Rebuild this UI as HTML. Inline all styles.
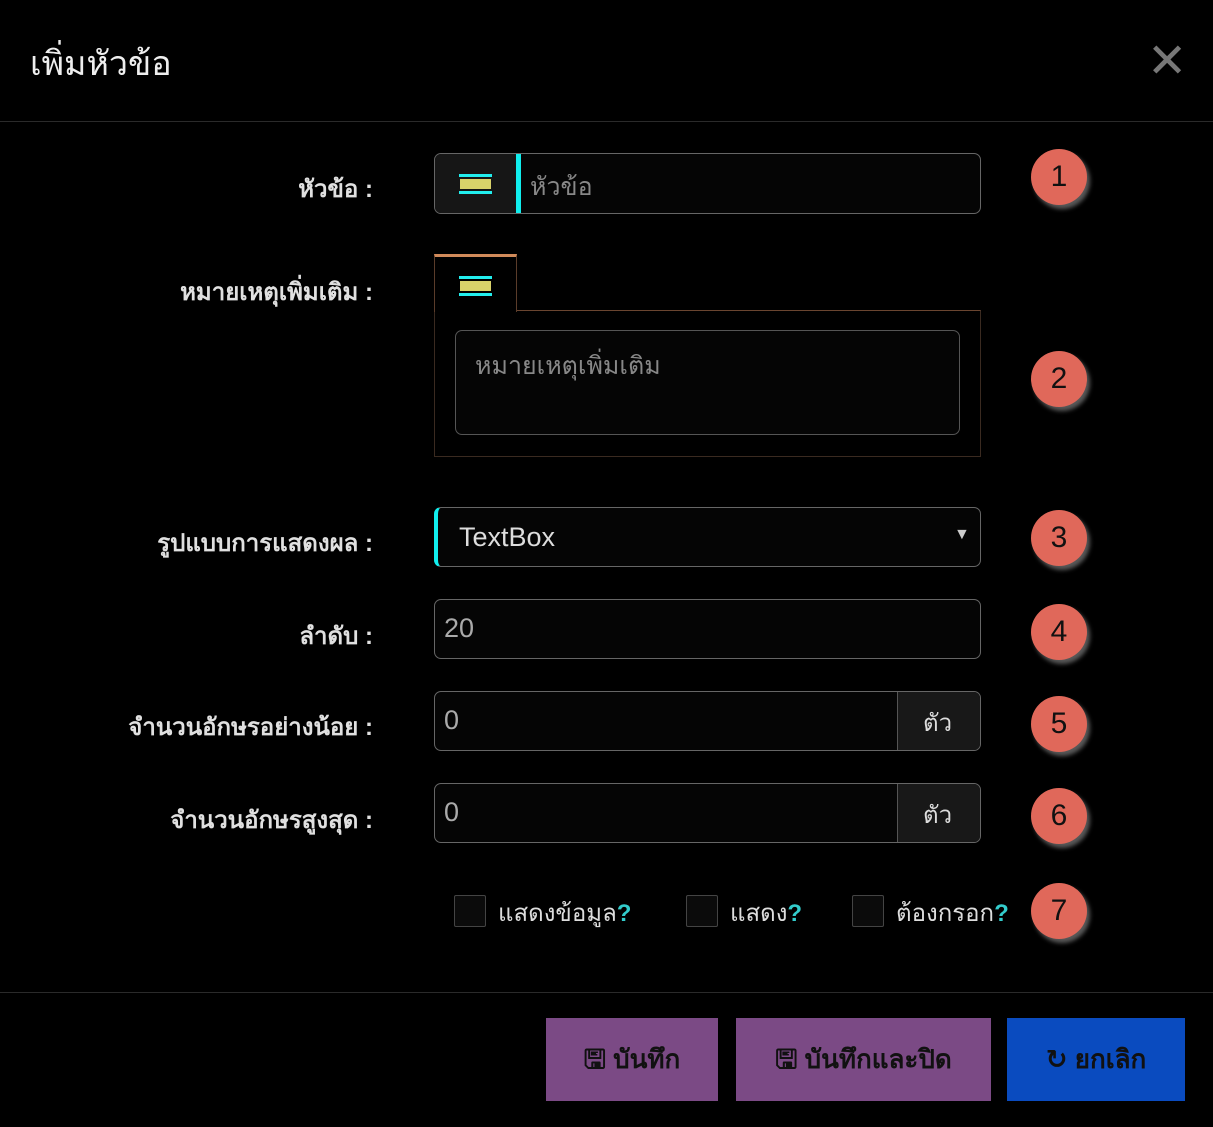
<!DOCTYPE html>
<html><head><meta charset="utf-8"><style>
*{box-sizing:border-box;margin:0;padding:0}
body{width:1213px;height:1127px;background:#000;font-family:"Liberation Sans","DejaVu Sans",sans-serif;color:#ddd;position:relative;overflow:hidden}
.a{position:absolute}
.lbl{position:absolute;right:840px;font-size:24px;color:#e0e0e0;text-align:right;white-space:nowrap;font-weight:bold}
.box{position:absolute;left:434px;width:547px;height:61px;border:1.5px solid #666;border-radius:7px;background:#050505}
.num{position:absolute;left:1031px;width:56px;height:56px;border-radius:50%;background:#e0685a;color:#111;font-size:30px;text-align:center;line-height:56px;box-shadow:3px 4px 4px rgba(255,255,255,.35)}
.ic{position:absolute;width:33px;height:20px}
.ic:before{content:"";position:absolute;left:0;right:0;top:0;height:3px;background:#2ee;}
.ic:after{content:"";position:absolute;left:0;right:0;bottom:0;height:3px;background:#2ee;}
.ic i{position:absolute;left:1px;right:1px;top:5px;height:10px;background:#d8d26a}
.cb{position:absolute;width:32px;height:32px;border:1.5px solid #444;background:#0b0b0b;border-radius:2px}
.ck{position:absolute;font-size:24px;color:#ddd;white-space:nowrap}
.ck b{color:#3cc}
.btn{position:absolute;top:1018px;height:83px;color:#111;font-size:26px;font-weight:bold;text-align:center;line-height:83px}
</style></head><body>
<div class="a" style="left:30px;top:36px;font-size:34px;color:#eee">เพิ่มหัวข้อ</div>
<div class="a" style="left:1147px;top:33px;font-size:48px;color:#777;font-weight:bold">✕</div>
<div class="a" style="left:0;top:121px;width:1213px;height:1px;background:#2a2a2a"></div>

<div class="lbl" style="top:169px">หัวข้อ :</div>
<div class="box" style="top:153px;height:61px"></div>
<div class="a" style="left:435px;top:154px;width:81px;height:59px;background:#161616;border-radius:6px 0 0 6px"></div>
<div class="ic" style="left:459px;top:174px"><i></i></div>
<div class="a" style="left:516px;top:154px;width:5px;height:59px;background:#1ee"></div>
<div class="a" style="left:530px;top:167px;font-size:25px;color:#888">หัวข้อ</div>
<div class="num" style="top:149px">1</div>

<div class="lbl" style="top:272px">หมายเหตุเพิ่มเติม :</div>
<div class="a" style="left:434px;top:310px;width:547px;height:147px;border:1.5px solid #3a2a20;border-top-color:#6a4530"></div>
<div class="a" style="left:434px;top:254px;width:83px;height:58px;background:#000;border:1.5px solid #5a3c2a;border-bottom:none;border-top:3px solid #d08a5a"></div>
<div class="ic" style="left:459px;top:276px"><i></i></div>
<div class="a" style="left:455px;top:330px;width:505px;height:105px;border:1.5px solid #555;border-radius:7px;background:#050505"></div>
<div class="a" style="left:475px;top:346px;font-size:25px;color:#888">หมายเหตุเพิ่มเติม</div>
<div class="num" style="top:351px">2</div>

<div class="lbl" style="top:523px">รูปแบบการแสดงผล :</div>
<div class="box" style="top:507px;height:60px;border-left:4px solid #1ee"></div>
<div class="a" style="left:459px;top:522px;font-size:27px;color:#ddd">TextBox</div>
<div class="a" style="left:954px;top:526px;font-size:16px;color:#ccc">▼</div>
<div class="num" style="top:510px">3</div>

<div class="lbl" style="top:616px">ลำดับ :</div>
<div class="box" style="top:599px;height:60px"></div>
<div class="a" style="left:444px;top:613px;font-size:27px;color:#aaa">20</div>
<div class="num" style="top:604px">4</div>

<div class="lbl" style="top:707px">จำนวนอักษรอย่างน้อย :</div>
<div class="box" style="top:691px;height:60px"></div>
<div class="a" style="left:897px;top:692px;width:83px;height:58px;background:#181818;border-left:1.5px solid #555;border-radius:0 6px 6px 0"></div>
<div class="a" style="left:923px;top:703px;font-size:24px;color:#ddd">ตัว</div>
<div class="a" style="left:444px;top:705px;font-size:27px;color:#aaa">0</div>
<div class="num" style="top:696px">5</div>

<div class="lbl" style="top:800px">จำนวนอักษรสูงสุด :</div>
<div class="box" style="top:783px;height:60px"></div>
<div class="a" style="left:897px;top:784px;width:83px;height:58px;background:#181818;border-left:1.5px solid #555;border-radius:0 6px 6px 0"></div>
<div class="a" style="left:923px;top:795px;font-size:24px;color:#ddd">ตัว</div>
<div class="a" style="left:444px;top:797px;font-size:27px;color:#aaa">0</div>
<div class="num" style="top:788px">6</div>

<div class="cb" style="left:454px;top:895px"></div><div class="ck" style="left:498px;top:893px">แสดงข้อมูล<b>?</b></div>
<div class="cb" style="left:686px;top:895px"></div><div class="ck" style="left:730px;top:893px">แสดง<b>?</b></div>
<div class="cb" style="left:852px;top:895px"></div><div class="ck" style="left:896px;top:893px">ต้องกรอก<b>?</b></div>
<div class="num" style="top:883px">7</div>

<div class="a" style="left:0;top:992px;width:1213px;height:1px;background:#2a2a2a"></div>
<div class="btn" style="left:546px;width:172px;background:#7b4a85">🖫 บันทึก</div>
<div class="btn" style="left:736px;width:255px;background:#7b4a85">🖫 บันทึกและปิด</div>
<div class="btn" style="left:1007px;width:178px;background:#0a4bbf">↻ ยกเลิก</div>
</body></html>
